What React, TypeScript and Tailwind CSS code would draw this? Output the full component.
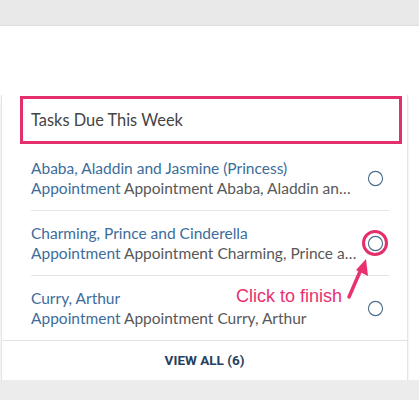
import { Circle } from 'lucide-react';

const tasks = [
  { name: 'Ababa, Aladdin and Jasmine (Princess)', detail: 'Appointment Ababa, Aladdin and Jasmine (Princess)', marked: false },
  { name: 'Charming, Prince and Cinderella', detail: 'Appointment Charming, Prince and Cinderella', marked: true },
  { name: 'Curry, Arthur', detail: 'Appointment Curry, Arthur', marked: false },
];

function CheckCircle({ marked }: { marked: boolean }) {
  return (
    <div className="relative flex h-[26px] w-[26px] shrink-0 items-center justify-center">
      {marked && (
        <div className="absolute inset-0 rounded-full border-[3px] border-[#e3306c]" />
      )}
      <Circle className="h-[17px] w-[17px] text-[#4d6b8c]" strokeWidth={1.6} />
    </div>
  );
}

export default function App() {
  return (
    <div
      className="relative h-[400px] w-[419px] overflow-hidden bg-white"
      style={{ fontFamily: 'Lato, "Open Sans", sans-serif' }}
    >
      <div className="h-[26px] border-b border-[#dedede] bg-[#e9e9e9]" />
      <div className="h-[69px]" />

      <div className="ml-[1px] flex h-[285px] w-[407px] flex-col border-x border-[#e4e4e4] shadow-[0_2px_2px_rgba(0,0,0,0.12)]">
        <div className="ml-[18px] mt-[1px] flex h-[48px] w-[382px] items-center border-[3px] border-[#e3306c] pl-[8px] text-[16.4px] text-[#444]">
          Tasks Due This Week
        </div>

        <div className="mt-[2px] pl-[29px] pr-[18px]">
          {tasks.map((task, i) => (
            <div
              key={task.name}
              className={`flex items-center py-[12px] ${i < tasks.length - 1 ? 'border-b border-[#e5e5e5]' : ''}`}
            >
              <div className="min-w-0 flex-1 pr-[5px] text-[15.5px] leading-[20px]">
                <div className="truncate text-[#3c6d9b]">{task.name}</div>
                <div className="truncate text-[#585858]">
                  <span className="text-[#3c6d9b]">Appointment</span> {task.detail}
                </div>
              </div>
              <div className="mr-[1px]">
                <CheckCircle marked={task.marked} />
              </div>
            </div>
          ))}
        </div>

        <div
          className="flex flex-1 items-center justify-center border-t border-[#e2e2e2] text-[13.5px] font-bold text-[#27405e]"
          style={{ fontFamily: 'Roboto, sans-serif' }}
        >
          VIEW ALL (6)
        </div>
      </div>

      <div className="h-[20px] bg-[#ececec]" />

      <div
        className="absolute left-[236px] top-[284px] text-[18px] leading-[24px] text-[#e8316f]"
        style={{ fontFamily: '"Liberation Sans", Arial, sans-serif' }}
      >
        Click to finish
      </div>
      <svg className="absolute left-[340px] top-[250px]" width="40" height="55" viewBox="0 0 40 55">
        <path d="M9 47 L22 17" stroke="#e8316f" strokeWidth="3.5" strokeLinecap="round" />
        <path d="M26 9 L28 26 L16 20 Z" fill="#e8316f" />
      </svg>
    </div>
  );
}
